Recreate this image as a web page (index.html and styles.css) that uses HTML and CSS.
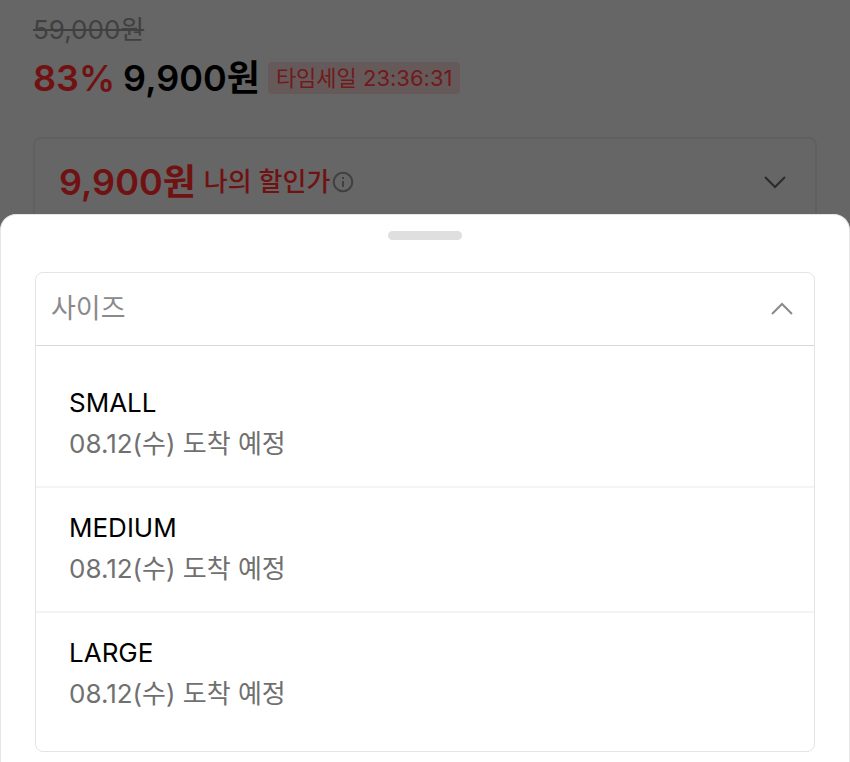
FILE: index.html
```
<!DOCTYPE html>
<html lang="ko">
<head>
    <meta charset="UTF-8">
    <meta name="viewport" content="width=device-width, initial-scale=1.0">
    <title>사이즈 선택</title>
    <link rel="stylesheet" href="styles.css">
</head>

<body>
    <main class="product">
        <del class="old-price">59,000원</del>
        <div class="price-row">
            <span class="rate">83%</span>
            <span class="price">9,900원</span>
            <span class="time-sale">타임세일 23:36:31</span>
        </div>
        <button class="my-price" type="button" aria-expanded="false">
            <span class="my-price-value">9,900원</span>
            <span class="my-price-label">나의 할인가</span>
            <svg class="info" viewBox="0 0 22 22" aria-hidden="true">
                <circle cx="11" cy="11" r="9.3"/>
                <path d="M11 10v6M11 6v2"/>
            </svg>
            <svg class="arrow" viewBox="0 0 24 14" aria-hidden="true">
                <path d="M2 2l10 10L22 2"/>
            </svg>
        </button>
    </main>

    <!--Bottom sheet-->
    <section class="sheet" aria-label="옵션 선택">
        <div class="handle"></div>
        <div class="dropdown">
            <button class="dropdown-title" type="button" aria-expanded="true" aria-controls="sizes">
                <span>사이즈</span>
                <svg class="arrow" viewBox="0 0 24 14" aria-hidden="true">
                    <path d="M2 12L12 2l10 10"/>
                </svg>
            </button>
            <ul class="options" id="sizes">
                <li>
                    <button class="option" type="button">
                        <span class="size">SMALL</span>
                        <span class="arrival">08.12(수) 도착 예정</span>
                    </button>
                </li>
                <li>
                    <button class="option" type="button">
                        <span class="size">MEDIUM</span>
                        <span class="arrival">08.12(수) 도착 예정</span>
                    </button>
                </li>
                <li>
                    <button class="option" type="button">
                        <span class="size">LARGE</span>
                        <span class="arrival">08.12(수) 도착 예정</span>
                    </button>
                </li>
            </ul>
        </div>
    </section>
</body>
</html>
```
FILE: styles.css
```
*{
    box-sizing: border-box;
}
body{
    margin: 0;
    background-color: #666666;
    font-family: Inter, "Noto Sans CJK KR", sans-serif;
    font-size: 26px;
    line-height: 40px;
    overflow: hidden;
}
button{
    padding: 0;
    border: none;
    background-color: transparent;
    font: inherit;
    text-align: left;
    cursor: pointer;
}
svg{
    fill: none;
    stroke: currentColor;
    flex-shrink: 0;
}

/* product page behind the sheet */
.product{
    padding: 10px 33px 0;
}
.old-price{
    display: block;
    color: #404040;
}
.price-row{
    display: flex;
    align-items: center;
    gap: 8px;
    height: 56px;
    font-size: 36px;
    font-weight: 600;
}
.rate{
    color: #701212;
}
.price{
    color: #000000;
}
.time-sale{
    padding: 0 8px;
    border-radius: 4px;
    background-color: #665959;
    color: #701a1c;
    font-size: 22px;
    font-weight: 400;
    line-height: 32px;
}
.my-price{
    display: flex;
    align-items: center;
    width: 100%;
    height: 90px;
    margin-top: 31px;
    padding: 0 28px 0 24px;
    border: 2px solid #606060;
    border-radius: 8px;
    color: #701212;
}
.my-price-value{
    font-size: 36px;
    font-weight: 600;
}
.my-price-label{
    margin-left: 8px;
    font-weight: 500;
}
.info{
    width: 22px;
    height: 22px;
    margin-left: 2px;
    color: #404040;
    stroke-width: 2;
}
.arrow{
    width: 24px;
    height: 14px;
    margin-left: auto;
    stroke-width: 2;
}
.my-price .arrow{
    color: #2b2b2b;
}

/* sheet */
.sheet{
    position: fixed;
    left: 0;
    right: 0;
    bottom: 0;
    padding: 16px 34px 10px;
    border: 1px solid #e6e6e6;
    border-bottom: none;
    border-radius: 16px 16px 0 0;
    background-color: #ffffff;
}
.handle{
    width: 74px;
    height: 9px;
    margin: 0 auto 32px;
    border-radius: 5px;
    background-color: #dfdfdf;
}
.dropdown{
    border: 1px solid #e4e4e4;
    border-radius: 8px;
}
.dropdown-title{
    display: flex;
    align-items: center;
    width: 100%;
    height: 73px;
    padding: 0 20px 0 15px;
    border-bottom: 1px solid #d8d8d8;
    color: #8a8a8a;
    font-size: 27px;
}
.options{
    margin: 0;
    padding: 17px 0 15px;
    list-style: none;
}
.options li + li{
    border-top: 2px solid #f4f4f4;
}
.option{
    display: flex;
    flex-direction: column;
    width: 100%;
    padding: 19px 33px 22px;
    line-height: 41px;
}
.size{
    color: #000000;
}
.arrival{
    color: #707070;
}
```
